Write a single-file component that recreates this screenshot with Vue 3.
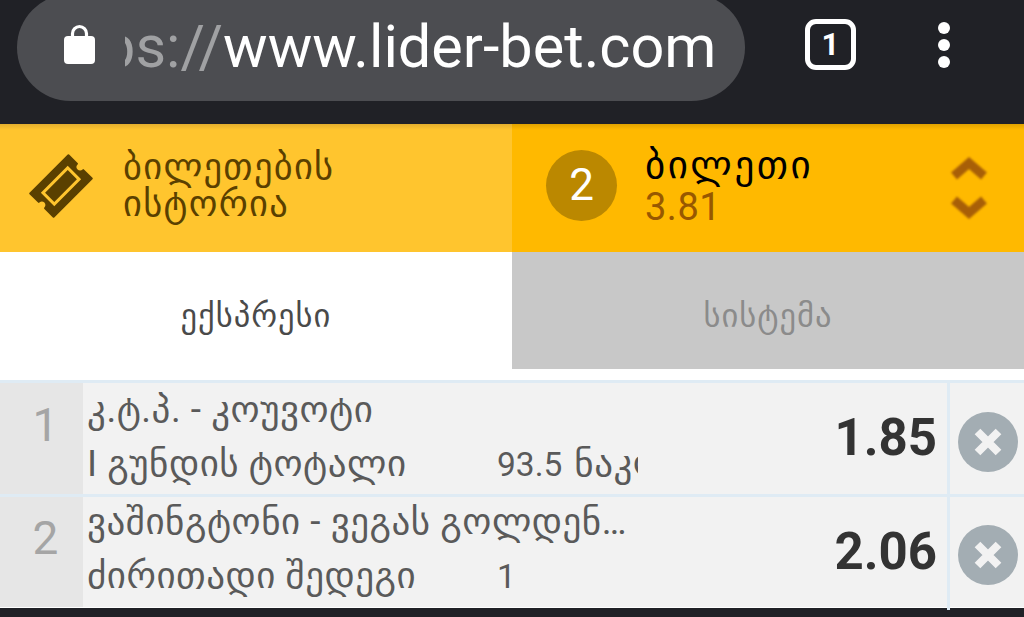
<script setup>
const rows = [
  { n: 1, teams: 'კ.ტ.პ. - კოუვოტი', market: 'I გუნდის ტოტალი', num: '93.5', word: 'ნაკლები', odd: '1.85' },
  { n: 2, teams: 'ვაშინგტონი - ვეგას გოლდენ…', market: 'ძირითადი შედეგი', num: '1', word: '', odd: '2.06' }
]
</script>

<template>
  <div class="page">
    <header class="chrome">
      <div class="omnibox">
        <svg class="lock" viewBox="0 0 31 40" width="31" height="40">
          <path d="M8.5 16V9.5a7 7 0 0 1 14 0V16" fill="none" stroke="#fff" stroke-width="3.2" />
          <rect x="0" y="12" width="31" height="28" rx="4" fill="#fff" />
        </svg>
        <div class="url">
          <div class="scheme-clip"><span class="scheme">https://</span></div>
          <span class="host">www.lider-bet.com</span>
        </div>
      </div>
      <div class="tabs">1</div>
      <div class="dots"><i></i><i></i><i></i></div>
    </header>
    <div class="top">
      <div class="history">
        <svg class="ticket" viewBox="0 0 64 64" width="64" height="64">
          <g transform="rotate(-45 32 32)">
            <path d="M5 15.5h54v12a4.5 4.5 0 0 0 0 9v12H5v-12a4.5 4.5 0 0 0 0-9z" fill="#5a4000" stroke="#5a4000" stroke-width="2" stroke-linejoin="round" />
            <rect x="14.5" y="24" width="35" height="16" fill="none" stroke="#ffc52e" stroke-width="3" />
          </g>
        </svg>
        <div class="history-text">ბილეთების<br>ისტორია</div>
      </div>
      <div class="slip">
        <div class="count">2</div>
        <div class="slip-text">
          <div class="slip-title">ბილეთი</div>
          <div class="slip-odd">3.81</div>
        </div>
        <svg class="chev" viewBox="0 0 38 62" width="38" height="62">
          <path d="M4 19 19 6l15 13M4 43l15 13 15-13" fill="none" stroke="#a85f07" stroke-width="9" />
        </svg>
      </div>
    </div>
    <div class="modes">
      <div class="mode active">ექსპრესი</div>
      <div class="mode off">სისტემა</div>
    </div>
    <div class="list">
      <div v-for="r in rows" :key="r.n" class="row">
        <div class="idx">{{ r.n }}</div>
        <div class="info">
          <div class="teams">{{ r.teams }}</div>
          <div class="sub">
            <span class="market">{{ r.market }}</span>
            <span class="num">{{ r.num }}</span>
            <span v-if="r.word" class="word">{{ r.word }}</span>
          </div>
        </div>
        <div class="odd">{{ r.odd }}</div>
        <div class="close">
          <svg viewBox="0 0 60 60" width="60" height="60">
            <circle cx="30" cy="30" r="30" fill="#a3adb3" />
            <path d="M19.5 19.5l21 21M40.5 19.5l-21 21" stroke="#f2f2f2" stroke-width="8" />
          </svg>
        </div>
      </div>
    </div>
  </div>
</template>

<style>
html, body { margin: 0; background: #202126; }
</style>

<style scoped>
.page { width: 1024px; height: 617px; overflow: hidden; background: #202126; font-family: Roboto, "Noto Sans", "DejaVu Sans", sans-serif; }
.chrome { height: 124px; display: flex; align-items: flex-start; background: #202126; }
.omnibox { margin: -6px 0 0 17px; width: 728px; height: 107px; border-radius: 54px; background: #4c4d51; display: flex; align-items: center; box-sizing: border-box; padding-left: 47px; }
.lock { flex: none; margin-bottom: 8px; }
.url { margin-left: 30px; display: flex; align-items: baseline; white-space: nowrap; font-size: 59.4px; margin-bottom: 2px; }
.scheme-clip { width: 98px; overflow: hidden; display: flex; justify-content: flex-end; }
.scheme { color: #a0a1a3; flex: none; }
.host { color: #fff; }
.tabs { margin: 19px 0 0 60px; box-sizing: border-box; width: 51px; height: 51px; border: 5px solid #fff; border-radius: 11px; color: #fff; font-size: 31px; font-weight: 700; display: flex; align-items: center; justify-content: center; }
.dots { margin: 22px 0 0 82px; display: flex; flex-direction: column; gap: 5px; }
.dots i { display: block; width: 12px; height: 12px; border-radius: 50%; background: #fff; }
.top { display: flex; height: 128px; }
.history { width: 512px; background: linear-gradient(#e3ae2e, #ffc52e 6px); display: flex; align-items: center; padding-left: 29px; box-sizing: border-box; }
.ticket { flex: none; margin-bottom: 4px; }
.history-text { margin-left: 30px; color: #5a4000; font-size: 36.5px; line-height: 37px; letter-spacing: 1.3px; margin-bottom: 6px; }
.slip { width: 512px; background: linear-gradient(#e0a200, #ffb900 6px); display: flex; align-items: center; padding-left: 34px; box-sizing: border-box; }
.count { flex: none; width: 71px; height: 71px; margin-bottom: 6px; border-radius: 50%; background: #bb8800; color: #fff; font-size: 44px; display: flex; align-items: center; justify-content: center; }
.slip-text { margin-left: 28px; flex: 1; margin-bottom: 2px; }
.slip-title { font-size: 39px; line-height: 40px; color: #000; letter-spacing: 2.5px; }
.slip-odd { font-size: 38px; line-height: 44px; color: #985800; letter-spacing: .5px; }
.chev { flex: none; margin-right: 36px; filter: blur(.8px); }
.modes { display: flex; height: 117px; }
.mode { width: 512px; display: flex; align-items: center; justify-content: center; font-size: 32.5px; letter-spacing: 1px; padding-top: 10px; box-sizing: border-box; }
.active { background: #fff; color: #4a4a4a; }
.off { background: #c8c8c8; color: #8b8b8b; }
.list { padding: 11px 0 1px; background: #fff; }
.row { height: 111px; display: flex; background: #f2f2f2; border-top: 3px solid #dfebf4; }
.row + .row { height: 110px; }
.row + .row .info { margin-top: -2px; }
.idx { flex: none; width: 83px; box-sizing: border-box; padding: 0 0 28px 8px; background: #e6e6e6; color: #a5a5a5; font-size: 46px; display: flex; align-items: center; justify-content: center; }
.info { flex: none; width: 555px; padding-left: 4px; box-sizing: border-box; color: #5a5a5a; font-size: 37px; letter-spacing: .5px; overflow: hidden; }
.teams { white-space: nowrap; line-height: 54px; }
.sub { display: flex; align-items: baseline; line-height: 54px; white-space: nowrap; }
.market { width: 410px; flex: none; }
.num { font-size: 33.5px; margin-right: 12px; letter-spacing: 0; }
.word { flex: none; }
.odd { flex: 1; text-align: right; font-size: 51px; font-weight: 700; color: #333; padding-right: 10px; line-height: 110px; }
.close { position: relative; width: 77px; flex: none; border-left: 3px solid #dfebf4; box-sizing: border-box; display: flex; align-items: center; justify-content: center; padding: 6px 0 0 2px; }
.row + .row .close::after { content: ""; position: absolute; left: -3px; bottom: -3px; width: 3px; height: 3px; background: #dfebf4; }
</style>
